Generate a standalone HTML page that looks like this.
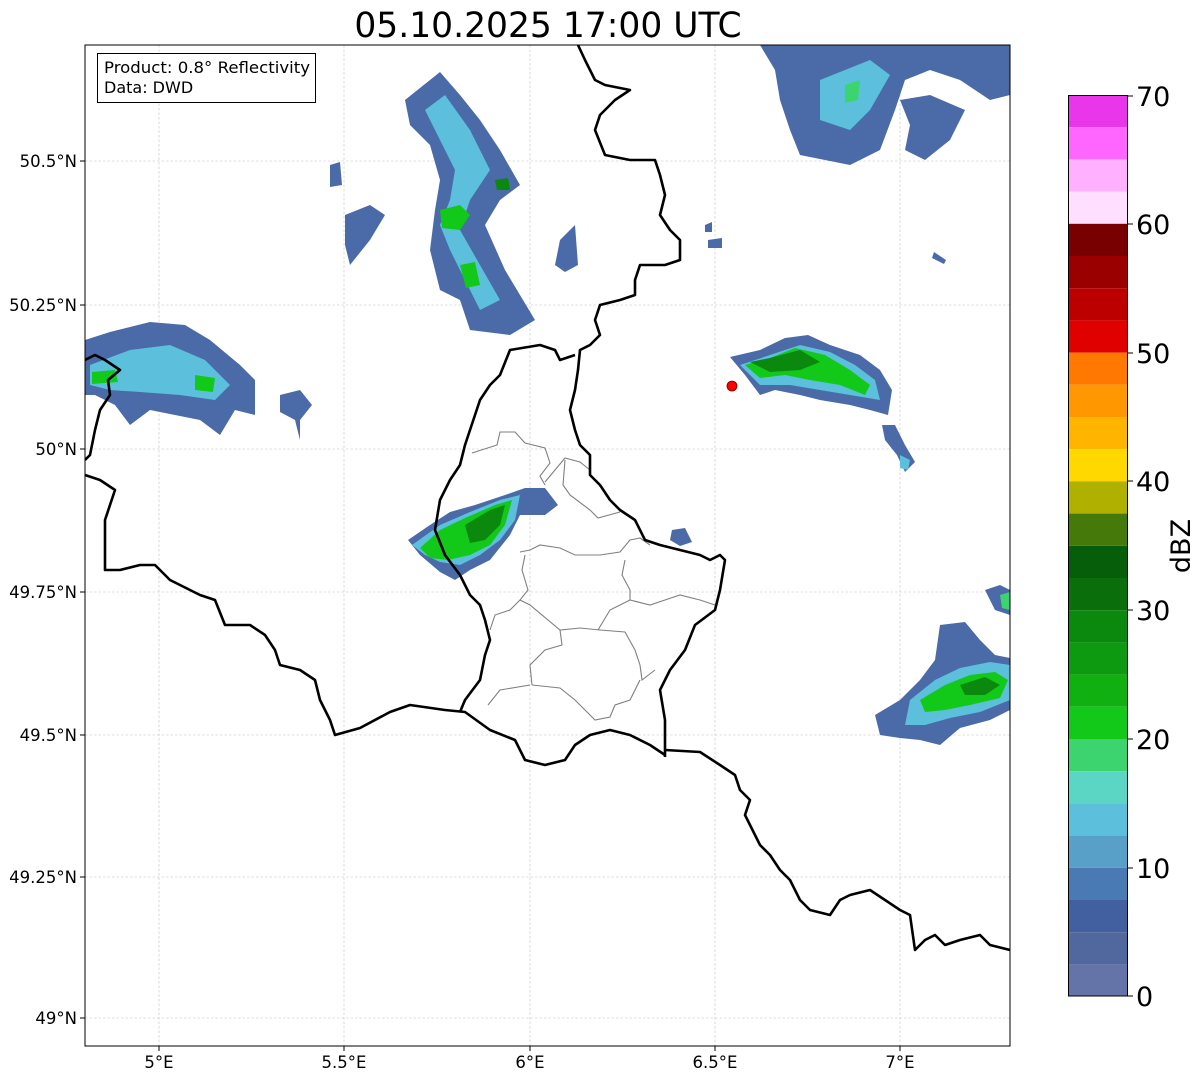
<!DOCTYPE html>
<html><head><meta charset="utf-8"><style>
html,body{margin:0;padding:0;background:#fff;width:1202px;height:1081px;overflow:hidden}
svg{display:block;font-family:"DejaVu Sans","Liberation Sans",sans-serif}
</style></head><body>
<svg width="1202" height="1081" viewBox="0 0 1202 1081" xmlns="http://www.w3.org/2000/svg">
<rect width="1202" height="1081" fill="#fff"/>
<text x="548" y="37" font-size="34.5" text-anchor="middle" fill="#000">05.10.2025 17:00 UTC</text>
<defs><clipPath id="c"><rect x="85" y="45" width="925" height="1001"/></clipPath></defs>
<g clip-path="url(#c)">
<g stroke="#c0c0c0" stroke-width="0.6" stroke-dasharray="2.5,2">
<line x1="159" y1="45" x2="159" y2="1046"/><line x1="344" y1="45" x2="344" y2="1046"/><line x1="530" y1="45" x2="530" y2="1046"/><line x1="715" y1="45" x2="715" y2="1046"/><line x1="900" y1="45" x2="900" y2="1046"/>
<line x1="85" y1="161" x2="1010" y2="161"/><line x1="85" y1="305" x2="1010" y2="305"/><line x1="85" y1="449" x2="1010" y2="449"/><line x1="85" y1="592" x2="1010" y2="592"/><line x1="85" y1="735" x2="1010" y2="735"/><line x1="85" y1="877" x2="1010" y2="877"/><line x1="85" y1="1018" x2="1010" y2="1018"/>
</g>
<g>
<polygon fill="#4a6aa8" points="85,340 110,332 150,322 185,325 210,340 240,365 255,380 255,415 235,410 220,435 200,420 175,415 150,410 130,425 115,405 95,395 85,395"/>
<polygon fill="#5cc0dc" points="90,365 130,350 170,345 205,360 230,385 215,400 180,395 140,392 110,390 90,385"/>
<polygon fill="#12c818" points="92,372 115,370 118,382 92,384"/>
<polygon fill="#12c818" points="195,375 215,378 213,392 195,390"/>
<polygon fill="#4a6aa8" points="280,395 300,390 312,405 300,420 300,440 295,420 280,412"/>
<polygon fill="#4a6aa8" points="405,100 440,72 460,95 480,120 500,150 520,185 500,200 485,225 505,270 535,320 510,335 470,330 460,300 440,290 430,250 435,210 440,180 430,145 410,125"/>
<polygon fill="#5cc0dc" points="425,110 445,95 470,130 490,170 470,200 460,230 480,265 500,300 480,310 465,280 450,250 440,225 450,200 455,170 440,140"/>
<polygon fill="#12c818" points="440,210 460,205 470,215 460,230 442,228"/>
<polygon fill="#0b880e" points="495,180 508,178 510,190 497,190"/>
<polygon fill="#12c818" points="460,265 475,262 480,285 466,288"/>
<polygon fill="#4a6aa8" points="345,215 370,205 385,215 370,240 350,265 345,245"/>
<polygon fill="#4a6aa8" points="330,165 340,162 342,185 330,187"/>
<polygon fill="#4a6aa8" points="560,240 575,225 578,265 565,272 555,265"/>
<polygon fill="#4a6aa8" points="760,45 1010,45 1010,95 990,100 960,80 930,70 905,80 895,110 880,150 850,165 800,155 790,130 780,100 775,70"/>
<polygon fill="#5cc0dc" points="820,80 870,60 890,75 870,110 850,130 820,120"/>
<polygon fill="#3cd46e" points="845,85 860,80 858,100 845,103"/>
<polygon fill="#4a6aa8" points="900,100 930,95 965,110 950,140 925,160 905,150 910,125"/>
<polygon fill="#4a6aa8" points="705,225 712,222 712,232 705,232"/>
<polygon fill="#4a6aa8" points="708,240 722,238 722,248 708,248"/>
<polygon fill="#4a6aa8" points="934,252 946,260 944,264 932,258"/>
<polygon fill="#4a6aa8" points="730,357 760,350 785,338 808,335 830,345 860,355 880,370 892,390 888,415 870,410 850,405 820,400 800,395 775,390 760,395 745,375"/>
<polygon fill="#5cc0dc" points="740,365 770,355 800,345 830,352 855,365 875,380 880,400 850,395 820,390 790,385 760,385"/>
<polygon fill="#12c818" points="745,365 770,358 795,348 825,355 850,370 870,385 865,395 840,385 810,380 785,375 760,378"/>
<polygon fill="#0b880e" points="750,362 770,358 800,350 820,362 800,370 770,372"/>
<polygon fill="#4a6aa8" points="882,425 895,425 905,445 915,462 905,472 897,455 885,440"/>
<polygon fill="#5cc0dc" points="900,455 910,460 908,470 900,468"/>
<polygon fill="#4a6aa8" points="408,540 430,525 450,512 475,505 505,495 525,488 545,488 558,505 545,515 520,515 510,535 490,560 470,570 455,580 440,572 420,555"/>
<polygon fill="#5cc0dc" points="412,545 440,525 470,512 500,500 520,495 515,520 500,540 480,555 460,565 440,562 425,555"/>
<polygon fill="#12c818" points="420,548 440,530 465,518 495,505 512,500 505,525 490,545 470,555 448,560 430,558"/>
<polygon fill="#0b880e" points="465,525 490,510 505,505 500,525 485,540 470,543"/>
<polygon fill="#4a6aa8" points="672,530 685,528 692,542 680,546 670,540"/>
<polygon fill="#4a6aa8" points="940,625 965,622 980,640 995,655 1010,658 1010,710 990,720 960,728 940,745 920,740 900,738 880,735 875,715 900,700 920,680 935,660"/>
<polygon fill="#5cc0dc" points="910,700 935,680 960,668 990,662 1010,665 1010,700 980,712 950,718 925,725 905,725"/>
<polygon fill="#12c818" points="920,700 945,685 970,675 995,672 1008,680 1000,698 970,705 945,710 925,712"/>
<polygon fill="#0b880e" points="960,685 985,677 1000,685 985,695 965,695"/>
<polygon fill="#4a6aa8" points="985,590 1000,585 1010,590 1010,615 995,610"/>
<polygon fill="#3cd46e" points="1000,595 1010,592 1010,610 1002,608"/>
</g>
<g fill="none" stroke="#808080" stroke-width="1.1">
<polyline points="472,453 497,445 500,432 515,432 525,443 545,448 550,463 540,476 545,485"/>
<polyline points="545,482 555,470 565,458 580,462 590,470"/>
<polyline points="565,460 563,485 570,495 590,510 598,518 620,512"/>
<polyline points="520,552 530,550 540,545 560,548 575,555 600,555 620,552 630,540 640,538 650,545"/>
<polyline points="525,555 522,570 528,590 520,600 530,605 560,630 580,628 600,630 625,632 635,650 640,665 642,680 655,670"/>
<polyline points="625,560 622,575 630,590 630,600 610,610 598,630"/>
<polyline points="630,600 650,605 665,600 680,595 700,600 715,605"/>
<polyline points="560,630 562,645 545,650 530,665 532,685"/>
<polyline points="530,685 500,690 488,705"/>
<polyline points="532,685 560,688 575,700 590,715 595,720 610,717 615,705 630,700 640,680"/>
<polyline points="520,600 510,610 495,615 490,630"/>
</g>
<g fill="none" stroke="#000" stroke-width="2.6" stroke-linejoin="round">
<polyline points="578,45 585,60 595,80 605,85 630,90 615,100 600,115 595,130 605,155 630,160 655,160 660,175 665,195 660,215 670,230 680,240 680,260 665,265 640,265 635,280 635,295 620,300 600,305 595,320 600,335 590,345 580,350 578,370 575,390 570,410 575,430 580,445 590,455 590,475 600,485 610,500 620,510 635,520 645,540 660,545 680,550 700,555 710,560 720,555 725,560 720,590 715,610 695,625 685,650 670,670 660,690 665,720 665,757"/>
<polyline points="665,750 700,752 720,765 735,775 740,790 750,800 745,815 760,845 770,855 780,870 790,880 800,900 810,910 830,915 840,900 850,895 870,890 885,900 900,910 910,915 915,950 925,940 935,935 945,945 960,940 980,935 990,945 1010,950"/>
<polyline points="460,712 465,700 480,680 485,655 490,640 485,620 480,605 470,595 460,575 445,555 435,530 440,500 450,480 460,465 465,445 470,430 480,400 490,385 500,375 510,350 540,345 555,350 560,360 575,355"/>
<polyline points="85,475 100,480 115,490 105,520 105,570 120,570 140,565 155,565 170,580 200,595 215,600 225,625 250,625 265,635 275,650 280,665 300,670 315,680 320,700 330,720 335,735 360,728 390,712 410,705 445,710 465,712 490,730 515,740 525,760 545,765 565,760 575,745 590,735 610,730 630,735 650,745 665,755"/>
<polyline points="85,360 95,355 105,360 120,370 108,380 110,395 100,410 95,430 90,455 85,460"/>
</g>
<circle cx="732" cy="386" r="5" fill="#f00" stroke="#600" stroke-width="0.8"/>
</g>
<rect x="85" y="45" width="925" height="1001" fill="none" stroke="#000" stroke-width="1"/>
<rect x="97.5" y="53.5" width="218" height="49" fill="#fff" stroke="#000" stroke-width="1"/>
<text x="104" y="73" font-size="16" fill="#000" textLength="206" lengthAdjust="spacingAndGlyphs">Product: 0.8° Reflectivity</text>
<text x="104" y="93" font-size="16" fill="#000">Data: DWD</text>
<g stroke="#000" stroke-width="1">
<line x1="80" y1="161" x2="85" y2="161"/><line x1="80" y1="305" x2="85" y2="305"/><line x1="80" y1="449" x2="85" y2="449"/><line x1="80" y1="592" x2="85" y2="592"/><line x1="80" y1="735" x2="85" y2="735"/><line x1="80" y1="877" x2="85" y2="877"/><line x1="80" y1="1018" x2="85" y2="1018"/>
<line x1="159" y1="1046" x2="159" y2="1051"/><line x1="344" y1="1046" x2="344" y2="1051"/><line x1="530" y1="1046" x2="530" y2="1051"/><line x1="715" y1="1046" x2="715" y2="1051"/><line x1="900" y1="1046" x2="900" y2="1051"/>
</g>
<g font-size="16.5" fill="#000" text-anchor="end">
<text x="77" y="167">50.5°N</text><text x="77" y="311">50.25°N</text><text x="77" y="455">50°N</text><text x="77" y="598">49.75°N</text><text x="77" y="741">49.5°N</text><text x="77" y="883">49.25°N</text><text x="77" y="1024">49°N</text>
</g>
<g font-size="16.5" fill="#000" text-anchor="middle">
<text x="159" y="1068">5°E</text><text x="344" y="1068">5.5°E</text><text x="530" y="1068">6°E</text><text x="715" y="1068">6.5°E</text><text x="900" y="1068">7°E</text>
</g>
<g>
<rect x="1068" y="95" width="60" height="32.2" fill="#ea36ea"/>
<rect x="1068" y="127.2" width="60" height="32.2" fill="#ff66ff"/>
<rect x="1068" y="159.4" width="60" height="32.2" fill="#ffb0ff"/>
<rect x="1068" y="191.6" width="60" height="32.2" fill="#ffdfff"/>
<rect x="1068" y="223.8" width="60" height="32.2" fill="#780000"/>
<rect x="1068" y="256" width="60" height="32.2" fill="#9a0000"/>
<rect x="1068" y="288.2" width="60" height="32.2" fill="#bc0000"/>
<rect x="1068" y="320.4" width="60" height="32.2" fill="#e00000"/>
<rect x="1068" y="352.6" width="60" height="32.2" fill="#ff7800"/>
<rect x="1068" y="384.8" width="60" height="32.2" fill="#ff9800"/>
<rect x="1068" y="417" width="60" height="32.2" fill="#ffb400"/>
<rect x="1068" y="449.2" width="60" height="32.2" fill="#ffd800"/>
<rect x="1068" y="481.4" width="60" height="32.2" fill="#b0b000"/>
<rect x="1068" y="513.6" width="60" height="32.2" fill="#457a0a"/>
<rect x="1068" y="545.8" width="60" height="32.2" fill="#065e0a"/>
<rect x="1068" y="578" width="60" height="32.2" fill="#0a6e0a"/>
<rect x="1068" y="610.2" width="60" height="32.2" fill="#0b880e"/>
<rect x="1068" y="642.4" width="60" height="32.2" fill="#0e9a10"/>
<rect x="1068" y="674.6" width="60" height="32.2" fill="#0fb010"/>
<rect x="1068" y="706.8" width="60" height="32.2" fill="#12c818"/>
<rect x="1068" y="739" width="60" height="32.2" fill="#3cd46e"/>
<rect x="1068" y="771.2" width="60" height="32.2" fill="#5cd6c4"/>
<rect x="1068" y="803.4" width="60" height="32.2" fill="#5cc0dc"/>
<rect x="1068" y="835.6" width="60" height="32.2" fill="#58a0c8"/>
<rect x="1068" y="867.8" width="60" height="32.2" fill="#4a7ab4"/>
<rect x="1068" y="900" width="60" height="32.2" fill="#4260a0"/>
<rect x="1068" y="932.2" width="60" height="32.2" fill="#50689e"/>
<rect x="1068" y="964.4" width="60" height="31.6" fill="#6474a8"/>
<rect x="1068.5" y="95.5" width="59" height="900.5" fill="none" stroke="#000" stroke-width="1"/>
</g>
<g stroke="#000" stroke-width="1">
<line x1="1128" y1="96" x2="1133" y2="96"/><line x1="1128" y1="224" x2="1133" y2="224"/><line x1="1128" y1="353" x2="1133" y2="353"/><line x1="1128" y1="481" x2="1133" y2="481"/><line x1="1128" y1="610" x2="1133" y2="610"/><line x1="1128" y1="739" x2="1133" y2="739"/><line x1="1128" y1="868" x2="1133" y2="868"/><line x1="1128" y1="996" x2="1133" y2="996"/>
</g>
<g font-size="27" fill="#000">
<text x="1136" y="106">70</text><text x="1136" y="234">60</text><text x="1136" y="363">50</text><text x="1136" y="491">40</text><text x="1136" y="620">30</text><text x="1136" y="749">20</text><text x="1136" y="878">10</text><text x="1136" y="1006">0</text>
</g>
<text x="0" y="0" font-size="27" fill="#000" text-anchor="middle" transform="translate(1190,546) rotate(-90)">dBZ</text>
</svg>
</body></html>
